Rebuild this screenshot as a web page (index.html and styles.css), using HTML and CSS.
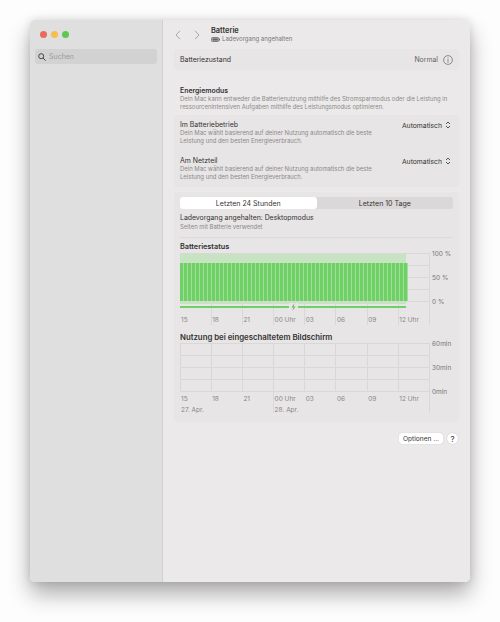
FILE: index.html
```html
<!DOCTYPE html>
<html lang="de">

<head>
    <meta charset="UTF-8">
    <meta name="viewport" content="width=device-width, initial-scale=1.0">
    <title>Batterie</title>
    <link rel="stylesheet" href="styles.css">
</head>

<body>

    <div class="window">

        <aside class="sidebar">
            <div class="traffic-lights">
                <span class="light red"></span>
                <span class="light yellow"></span>
                <span class="light green"></span>
            </div>
            <div class="search-box">
                <svg width="8" height="8" viewBox="0 0 8 8" fill="none" stroke="#444" stroke-width="1">
                    <circle cx="3.2" cy="3.2" r="2.5"/>
                    <path d="M5 5 L7.6 7.6"/>
                </svg>
                <span>Suchen</span>
            </div>
        </aside>

        <main class="content">

            <div class="toolbar">
                <svg class="nav-arrow" width="6" height="10" viewBox="0 0 6 10" fill="none" stroke="#a9a8a8" stroke-width="1">
                    <path d="M5 .8 L1 5 L5 9.2"/>
                </svg>
                <svg class="nav-arrow" width="6" height="10" viewBox="0 0 6 10" fill="none" stroke="#a9a8a8" stroke-width="1">
                    <path d="M1 .8 L5 5 L1 9.2"/>
                </svg>
                <div class="toolbar-title">
                    <h1>Batterie</h1>
                    <div class="toolbar-sub">
                        <svg width="9" height="5" viewBox="0 0 9 5">
                            <rect x=".4" y=".5" width="7.4" height="4" rx="1" fill="none" stroke="#666" stroke-width=".8"/>
                            <rect x="1.3" y="1.3" width="5.6" height="2.4" fill="#666"/>
                            <rect x="8" y="1.5" width="1" height="2" fill="#666"/>
                        </svg>
                        <span>Ladevorgang angehalten</span>
                    </div>
                </div>
            </div>

            <section class="card health-row">
                <span>Batteriezustand</span>
                <div class="health-value">
                    <span>Normal</span>
                    <svg width="10" height="10" viewBox="0 0 10 10" fill="none" stroke="#666" stroke-width=".7">
                        <circle cx="5" cy="5" r="4.4"/>
                        <path d="M5 4.2 V7.6 M5 2.4 V3.3"/>
                    </svg>
                </div>
            </section>

            <section class="energy-intro">
                <h2>Energiemodus</h2>
                <p class="hint">Dein Mac kann entweder die Batterienutzung mithilfe des Stromsparmodus oder die Leistung in<br>ressourcenintensiven Aufgaben mithilfe des Leistungsmodus optimieren.</p>
            </section>

            <section class="card mode-card">
                <div class="mode-row">
                    <div>
                        <div class="mode-label">Im Batteriebetrieb</div>
                        <p class="hint">Dein Mac wählt basierend auf deiner Nutzung automatisch die beste<br>Leistung und den besten Energieverbrauch.</p>
                    </div>
                    <div class="mode-select">
                        <span>Automatisch</span>
                        <svg width="6" height="8" viewBox="0 0 6 8" fill="none" stroke="#444" stroke-width=".9">
                            <path d="M1 3 L3 1 L5 3 M1 5 L3 7 L5 5"/>
                        </svg>
                    </div>
                </div>
                <div class="mode-row">
                    <div>
                        <div class="mode-label">Am Netzteil</div>
                        <p class="hint">Dein Mac wählt basierend auf deiner Nutzung automatisch die beste<br>Leistung und den besten Energieverbrauch.</p>
                    </div>
                    <div class="mode-select">
                        <span>Automatisch</span>
                        <svg width="6" height="8" viewBox="0 0 6 8" fill="none" stroke="#444" stroke-width=".9">
                            <path d="M1 3 L3 1 L5 3 M1 5 L3 7 L5 5"/>
                        </svg>
                    </div>
                </div>
            </section>

            <section class="card usage-card">
                <div class="tabs">
                    <div class="tab active">Letzten 24 Stunden</div>
                    <div class="tab">Letzten 10 Tage</div>
                </div>

                <div class="status-block">
                    <div class="status-title">Ladevorgang angehalten: Desktopmodus</div>
                    <p class="hint">Selten mit Batterie verwendet</p>
                </div>

                <h3 class="status-heading">Batteriestatus</h3>
                <div class="chart-row">
                    <div class="chart-stack">
                        <svg class="chart" width="250" height="72" viewBox="0 0 250 72">
                            <defs>
                                <pattern id="bars" x="0" y="0" width="4" height="38" patternUnits="userSpaceOnUse">
                                    <rect width="4" height="38" fill="#9fe096"/>
                                    <rect width="3" height="38" fill="#6fd066"/>
                                </pattern>
                            </defs>
                            <rect x="0" y="0" width="226" height="51" fill="#c6e4c1"/>
                            <g stroke="#d9d7d7" stroke-width="1">
                                <path d="M0 .5 H250 M0 12.5 H250 M0 24.5 H250 M0 36.5 H250 M0 48.5 H250"/>
                                <path d="M31.5 0 V72 M62.5 0 V72 M93.5 0 V72 M124.5 0 V72 M155.5 0 V72 M187.5 0 V72 M218.5 0 V72 M249.5 0 V72"/>
                            </g>
                            <rect x="0" y="10" width="228" height="38" fill="url(#bars)"/>
                            <rect x="0" y="53" width="226" height="2" fill="#6fd066"/>
                            <rect x="109" y="50" width="9" height="8" fill="#e7e5e5"/>
                            <path d="M114.6 50 L111.4 54.4 H113.3 L112.4 58 L115.6 53.4 H113.7 Z" fill="#6fbf66"/>
                        </svg>
                        <div class="axis-stack status-axis">
                            <div class="x-labels">
                                <span>15</span><span>18</span><span>21</span><span>00 Uhr</span><span>03</span><span>06</span><span>09</span><span>12 Uhr</span>
                            </div>
                        </div>
                    </div>
                    <div class="y-labels">
                        <span>100 %</span>
                        <span>50 %</span>
                        <span>0 %</span>
                    </div>
                </div>

                <h3 class="usage-title">Nutzung bei eingeschaltetem Bildschirm</h3>
                <div class="chart-row">
                    <div class="chart-stack">
                        <svg class="chart" width="250" height="70" viewBox="0 0 250 70">
                            <g stroke="#d9d7d7" stroke-width="1">
                                <path d="M0 .5 H250 M0 12.5 H250 M0 24.5 H250 M0 36.5 H250 M0 48.5 H250"/>
                                <path d="M.5 0 V48 M31.5 0 V48 M62.5 0 V48 M93.5 0 V70 M124.5 0 V48 M155.5 0 V48 M187.5 0 V48 M218.5 0 V48 M249.5 0 V70"/>
                            </g>
                        </svg>
                        <div class="axis-stack usage-axis">
                            <div class="x-labels">
                                <span>15</span><span>18</span><span>21</span><span>00 Uhr</span><span>03</span><span>06</span><span>09</span><span>12 Uhr</span>
                            </div>
                            <div class="date-labels">
                                <span>27. Apr.</span>
                                <span>28. Apr.</span>
                            </div>
                        </div>
                    </div>
                    <div class="y-labels">
                        <span>60min</span>
                        <span>30min</span>
                        <span>0min</span>
                    </div>
                </div>
            </section>

            <div class="footer-buttons">
                <button class="btn">Optionen ...</button>
                <button class="btn help">?</button>
            </div>

        </main>
    </div>

</body>

</html>
```

FILE: styles.css
```css
* {
    box-sizing: border-box;
}

html,
body {
    margin: 0;
    height: 622px;
    overflow: hidden;
    background-color: #fdfdfd;
}

body {
    padding: 20px 30px 40px;
    font-family: Inter, "Liberation Sans", sans-serif;
    font-size: 7px;
    color: #333;
}

.window {
    display: flex;
    height: 562px;
    border-radius: 5px;
    overflow: hidden;
    box-shadow: 0 12px 22px rgba(0, 0, 0, 0.32), 0 0 8px rgba(0, 0, 0, 0.12);
}

.sidebar {
    width: 133px;
    padding: 11px 5px;
    background-color: #dfdfdf;
    border-right: 1px solid #d2d0d0;
}

.traffic-lights {
    display: flex;
    gap: 4px;
    padding-left: 5px;
}

.light {
    width: 7px;
    height: 7px;
    border-radius: 50%;
}

.red { background-color: #ea6a5f; }
.yellow { background-color: #f3bf4f; }
.green { background-color: #61c454; }

.search-box {
    display: flex;
    align-items: center;
    gap: 3px;
    height: 15px;
    margin-top: 11px;
    padding-left: 3px;
    border-radius: 3px;
    background-color: #d2d2d2;
    color: #9c9c9c;
}

.content {
    flex: 1;
    display: flex;
    flex-direction: column;
    padding: 0 11px;
    background-color: #ebe9e9;
}

.toolbar {
    display: flex;
    align-items: center;
    height: 29px;
}

.nav-arrow {
    margin-left: 1px;
    margin-right: 12px;
}

.toolbar-title {
    margin-left: -1px;
}

h1 {
    margin: 0;
    font-size: 7.4px;
    font-weight: 600;
    line-height: 9px;
}

.toolbar-sub {
    display: flex;
    align-items: center;
    gap: 2px;
    font-size: 6px;
    line-height: 8px;
    color: #777;
}

.card {
    border-radius: 4px;
    background-color: #e7e5e5;
}

.health-row {
    display: flex;
    justify-content: space-between;
    align-items: center;
    height: 21px;
    padding: 0 6px;
    font-size: 6.9px;
}

.health-value {
    display: flex;
    align-items: center;
    gap: 5px;
    color: #666;
}

.energy-intro {
    padding: 16px 6px 0;
}

h2 {
    margin: 0;
    font-size: 6.9px;
    font-weight: 600;
    line-height: 9px;
}

.hint {
    margin: 0;
    font-size: 5.95px;
    line-height: 8px;
    color: #8b8989;
}

.mode-card {
    display: flex;
    flex-direction: column;
    gap: 11px;
    margin-top: 4px;
    padding: 5px 6px 6px;
}

.mode-row {
    display: flex;
    justify-content: space-between;
    align-items: flex-start;
}

.mode-label {
    font-size: 6.9px;
    line-height: 9px;
}

.mode-select {
    display: flex;
    align-items: center;
    gap: 3px;
    height: 10px;
    padding-right: 2px;
    font-size: 6.8px;
}

.usage-card {
    margin-top: 5px;
    height: 230px;
    padding: 5px 6px;
}

.tabs {
    display: flex;
    height: 12px;
    border-radius: 3px;
    background-color: #dad8d8;
}

.tab {
    flex: 1;
    display: flex;
    align-items: center;
    justify-content: center;
    font-size: 7px;
}

.tab.active {
    border-radius: 3px;
    background-color: #fff;
}

.status-block {
    height: 25px;
    margin-top: 4px;
    border-bottom: 1px solid #dcdada;
}

.status-title {
    font-size: 6.9px;
    line-height: 10px;
}

h3 {
    margin: 4px 0 1px;
    font-weight: 600;
    line-height: 10px;
}

.status-heading {
    font-size: 7.3px;
}

.usage-title {
    margin: 7px 0 1px;
    font-size: 7.8px;
}

.chart-row {
    display: flex;
}

.chart-stack {
    display: grid;
    width: 250px;
}

.chart,
.axis-stack {
    grid-area: 1 / 1;
}

.chart {
    display: block;
}

.status-axis {
    padding-top: 62px;
}

.usage-axis {
    padding-top: 51px;
}

.y-labels {
    display: flex;
    flex-direction: column;
    gap: 14px;
    height: 48px;
    margin-left: 2px;
    margin-top: -4px;
    font-size: 6.5px;
    line-height: 10px;
    white-space: nowrap;
    color: #777;
}

.x-labels {
    display: flex;
    height: 10px;
    font-size: 6.5px;
    line-height: 10px;
    color: #888;
}

.x-labels span {
    width: 31.2px;
    padding-left: 1px;
    white-space: nowrap;
}

.date-labels {
    display: flex;
    margin-top: 1px;
    font-size: 6.5px;
    line-height: 10px;
    color: #888;
}

.date-labels span {
    width: 93.6px;
    padding-left: 1px;
}

.footer-buttons {
    display: flex;
    justify-content: flex-end;
    align-items: center;
    gap: 4px;
    margin-top: 11px;
    padding-right: 1px;
}

.btn {
    height: 11px;
    padding: 0 4px;
    border: 0;
    border-radius: 3px;
    background-color: #fff;
    box-shadow: 0 0 1px rgba(0, 0, 0, 0.25);
    font-family: inherit;
    font-size: 6.6px;
    color: #333;
}

.btn.help {
    width: 11px;
    height: 11px;
    padding: 0;
    border-radius: 50%;
    font-size: 8px;
}
```
